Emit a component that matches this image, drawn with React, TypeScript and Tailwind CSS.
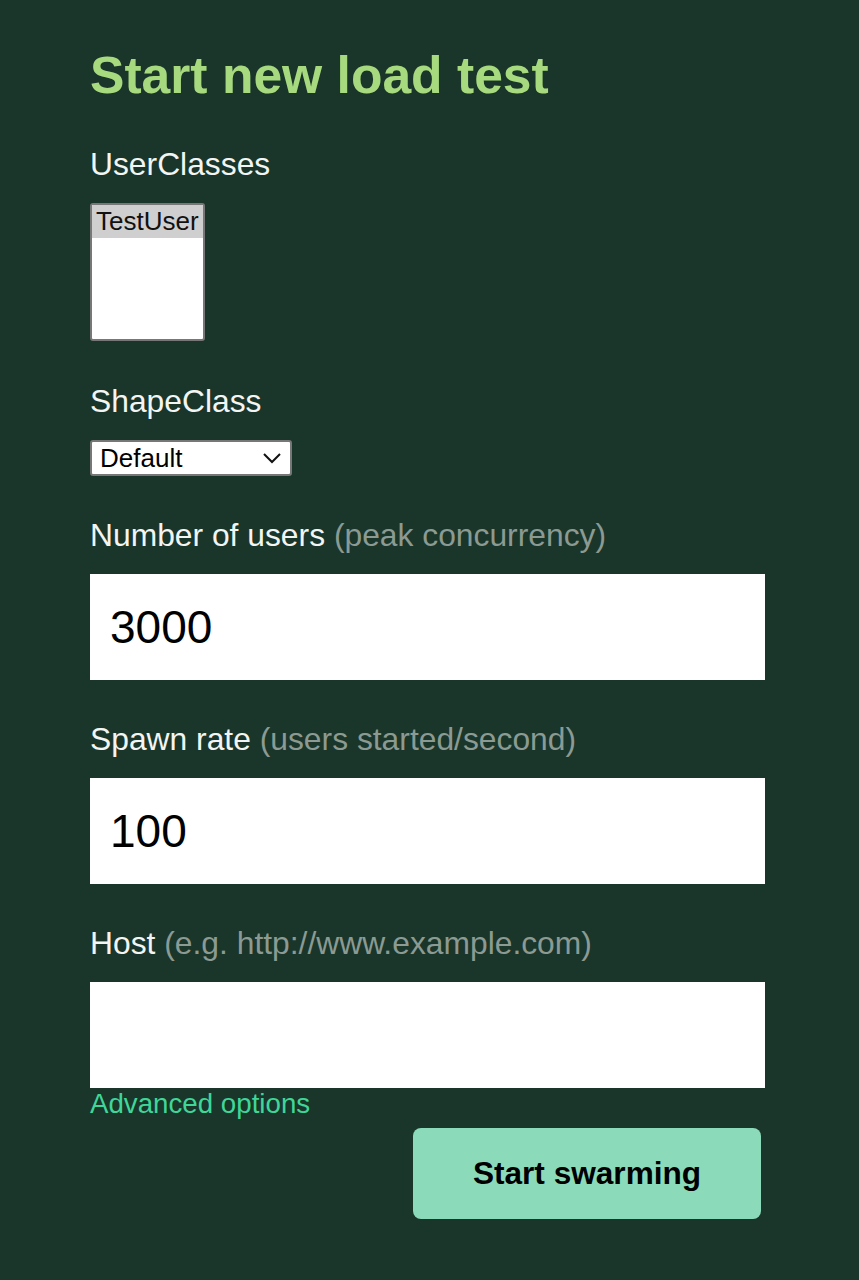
import React from "react";

const font = { fontFamily: '"Liberation Sans", Arial, sans-serif' };

function Label({ main, hint }: { main: string; hint?: string }) {
  return (
    <div className="text-[31.8px] leading-[36px] text-[#f2f5f3] mb-[21px] whitespace-nowrap">
      {main}
      {hint && <span className="text-[#8b9a92]"> {hint}</span>}
    </div>
  );
}

function TextInput({ value }: { value: string }) {
  return (
    <div className="h-[106px] w-full bg-white flex items-center px-[20px] text-[46px] text-black">
      {value}
    </div>
  );
}

export default function App() {
  return (
    <div style={font} className="min-h-[1280px] w-full bg-[#1a3529] pt-[45px] pl-[90px] pr-[94px]">
      <h1 className="text-[51.6px] leading-[60px] font-bold text-[#a7da7e] mb-[41px]">Start new load test</h1>

      <div className="mb-[42px]">
        <Label main="UserClasses" />
        <div className="w-[115px] h-[138px] bg-white border-2 border-[#777777] rounded-[3px] overflow-hidden">
          <div className="h-[33px] bg-[#cfcfcf] text-[26px] leading-[33px] text-[#111] pl-[4px] whitespace-nowrap">
            TestUser
          </div>
        </div>
      </div>

      <div className="mb-[41px]">
        <Label main="ShapeClass" />
        <div className="w-[202px] h-[36px] bg-white border-2 border-[#777777] rounded-[3px] flex items-center justify-between pl-[8px] pr-[8px] text-[26px] text-black">
          <span className="leading-[32px]">Default</span>
          <svg width="20" height="12" viewBox="0 0 20 12" fill="none">
            <polyline points="2,2 10,10 18,2" stroke="#111" strokeWidth="2" />
          </svg>
        </div>
      </div>

      <div className="mb-[41px]">
        <Label main="Number of users" hint="(peak concurrency)" />
        <TextInput value="3000" />
      </div>

      <div className="mb-[41px]">
        <Label main="Spawn rate" hint="(users started/second)" />
        <TextInput value="100" />
      </div>

      <div>
        <Label main="Host" hint="(e.g. http://www.example.com)" />
        <TextInput value="" />
      </div>

      <div className="text-[27.7px] leading-[32px] text-[#3fd69a]">Advanced options</div>

      <div className="flex justify-end mt-[8px] pr-[4px]">
        <button className="w-[348px] h-[91px] rounded-[8px] bg-[#8bdbbb] text-black font-bold text-[31.6px]">
          Start swarming
        </button>
      </div>
    </div>
  );
}
